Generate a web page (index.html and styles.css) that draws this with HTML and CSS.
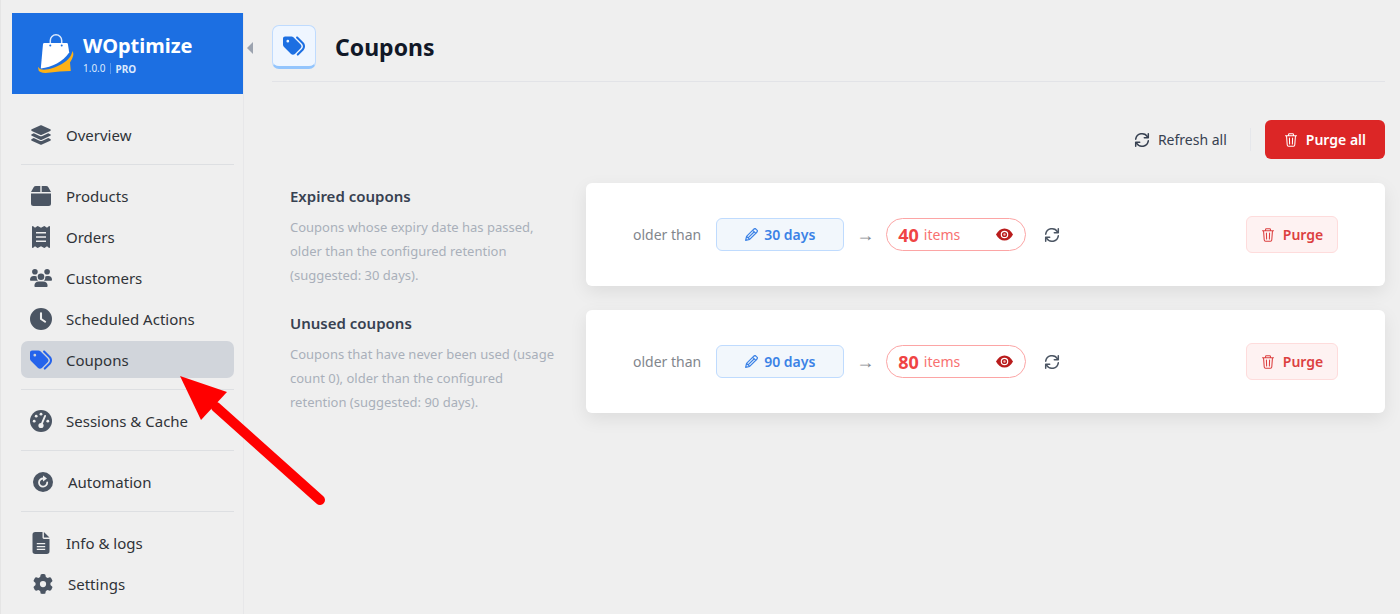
FILE: index.html
```html
<!DOCTYPE html>
<html lang="en">
<head>
    <meta charset="UTF-8">
    <meta name="viewport" content="width=device-width, initial-scale=1.0">
    <title>Coupons - WOptimize</title>
    <link rel="stylesheet" href="styles.css">
</head>
<body>
    <!-- icon sprite -->
    <svg class="sprite" aria-hidden="true">
        <symbol id="i-layers" viewBox="0 0 576 512"><path d="M264.5 5.2c14.9-6.9 32.1-6.9 47 0l218.6 101c8.5 3.9 13.9 12.4 13.9 21.8s-5.4 17.9-13.9 21.8l-218.6 101c-14.9 6.9-32.1 6.9-47 0L45.9 149.8C37.4 145.8 32 137.3 32 128s5.4-17.9 13.9-21.8L264.5 5.2zM476.9 209.6l53.2 24.6c8.5 3.9 13.9 12.4 13.9 21.8s-5.4 17.9-13.9 21.8l-218.6 101c-14.9 6.9-32.1 6.9-47 0L45.9 277.8C37.4 273.8 32 265.3 32 256s5.4-17.9 13.9-21.8l53.2-24.6 152 70.2c23.4 10.8 50.4 10.8 73.8 0l152-70.2zm-152 198.2l152-70.2 53.2 24.6c8.5 3.9 13.9 12.4 13.9 21.8s-5.4 17.9-13.9 21.8l-218.6 101c-14.9 6.9-32.1 6.9-47 0L45.9 405.8C37.4 401.8 32 393.3 32 384s5.4-17.9 13.9-21.8l53.2-24.6 152 70.2c23.4 10.8 50.4 10.8 73.8 0z"/></symbol>
        <symbol id="i-box" viewBox="0 0 20 20"><path d="M5 0h4.300v6H0l2.500-4.600Q3.300 0 5 0zM10.700 0H15q1.700 0 2.500 1.400L20 6h-9.300zM0 7.400h20V17.500q0 2.500-2.500 2.500h-15Q0 20 0 17.500z"/></symbol>
        <symbol id="i-receipt" viewBox="0 0 18 22"><path fill-rule="evenodd" d="M0 .5Q.5-.2 1.200.3L3 1.700 5.200.2Q5.700-.1 6.200.2L9 1.700 11.800.2q.5-.3 1 0L15 1.700 16.800.3Q17.500-.2 18 .5v21q-.5.7-1.200.2L15 20.300l-2.200 1.500q-.5.3-1 0L9 20.300l-2.800 1.500q-.5.3-1 0L3 20.300 1.200 21.700Q.5 22.200 0 21.500zM4 6v1.600h10V6zm0 4.200v1.600h10v-1.600zm0 4.200V16h10v-1.600z"/></symbol>
        <symbol id="i-users" viewBox="0 0 22 18"><circle cx="4.900" cy="2.800" r="2.800"/><circle cx="17.100" cy="2.800" r="2.800"/><circle cx="11" cy="7.700" r="3.300"/><path d="M0 10.800Q0 7 3.700 7h1.500q.8 0 1.500.4-.3 2.300 1.300 4.300H.8q-.8 0-.8-.9zM22 10.800Q22 7 18.300 7h-1.500q-.8 0-1.500.4.300 2.300-1.300 4.300h7.200q.8 0 .8-.9zM4.400 17q0-4.600 4.400-4.600h4.400q4.400 0 4.400 4.600 0 .9-.9.9H5.300q-.9 0-.9-.9z"/></symbol>
        <symbol id="i-clock" viewBox="0 0 512 512"><path d="M256 0a256 256 0 1 1 0 512A256 256 0 1 1 256 0zM232 120V256c0 8 4 15.500 10.700 20l96 64c11 7.400 25.900 4.400 33.300-6.700s4.400-25.900-6.700-33.300L280 243.200V120c0-13.300-10.700-24-24-24s-24 10.700-24 24z"/></symbol>
        <symbol id="i-tags" viewBox="0 0 512 512"><path d="M345 39.100L472.800 168.400c52.400 53 52.400 138.200 0 191.200L360.800 472.900c-9.300 9.400-24.500 9.500-33.900 .2s-9.500-24.500-.2-33.900L438.600 325.900c33.900-34.300 33.900-89.400 0-123.700L310.900 72.900c-9.300-9.400-9.200-24.600 .2-33.900s24.600-9.200 33.900 .2zM0 229.500V80C0 53.500 21.500 32 48 32H197.500c17 0 33.300 6.700 45.300 18.700l168 168c25 25 25 65.500 0 90.500L277.300 442.700c-25 25-65.500 25-90.500 0l-168-168C6.700 262.700 0 246.500 0 229.500zM144 144a32 32 0 1 0 -64 0 32 32 0 1 0 64 0z"/></symbol>
        <symbol id="i-gauge" viewBox="0 0 22 22"><circle cx="11" cy="11" r="11"/><g fill="#efefef"><circle cx="11" cy="4.200" r="1.400"/><circle cx="6.200" cy="6.200" r="1.400"/><circle cx="4.200" cy="11.200" r="1.400"/><circle cx="17.800" cy="11.200" r="1.400"/><circle cx="11" cy="15.500" r="2.600"/></g><path d="M11.500 14.500l3.600-8.600" fill="none" stroke="#efefef" stroke-width="1.900" stroke-linecap="round"/></symbol>
        <symbol id="i-auto" viewBox="0 0 20 20"><circle cx="10" cy="10" r="10"/><path d="M10.500 6.500A4.100 4.100 0 1 0 14.200 10.500" fill="none" stroke="#efefef" stroke-width="1.800" stroke-linecap="round"/><path d="M10 3.500l4 3-4 3z" fill="#efefef"/></symbol>
        <symbol id="i-file" viewBox="0 0 17 22"><path fill-rule="evenodd" d="M2.700 0H10v5.500q0 1.400 1.400 1.400H17v12.400q0 2.700-2.700 2.700H2.700Q0 22 0 19.300V2.700Q0 0 2.700 0zm8.700 0L17 5.500h-5.600zM4.300 11v1.300h8.400V11zm0 2.900v1.300h8.400v-1.300zm0 2.900v1.300h8.400v-1.300z"/></symbol>
        <symbol id="i-gear" viewBox="0 0 512 512"><path d="M495.900 166.600c3.200 8.700 .5 18.400-6.400 24.600l-43.300 39.400c1.100 8.300 1.700 16.800 1.700 25.400s-.6 17.100-1.700 25.400l43.300 39.400c6.900 6.200 9.600 15.900 6.400 24.600c-4.400 11.900-9.700 23.300-15.800 34.300l-4.700 8.100c-6.600 11-14 21.400-22.100 31.200c-5.900 7.200-15.700 9.600-24.500 6.800l-55.700-17.700c-13.400 10.300-28.200 18.900-44 25.400l-12.500 57.100c-2 9.100-9 16.300-18.200 17.800c-13.800 2.300-28 3.500-42.500 3.500s-28.700-1.200-42.500-3.500c-9.200-1.500-16.200-8.700-18.200-17.800l-12.500-57.100c-15.800-6.500-30.600-15.100-44-25.400L83.100 425.900c-8.800 2.800-18.600 .3-24.500-6.800c-8.100-9.800-15.500-20.200-22.100-31.200l-4.700-8.100c-6.100-11-11.400-22.400-15.800-34.300c-3.200-8.700-.5-18.400 6.400-24.600l43.300-39.400C64.600 273.100 64 264.600 64 256s.6-17.100 1.700-25.400L22.400 191.200c-6.900-6.200-9.600-15.900-6.400-24.600c4.400-11.900 9.700-23.300 15.800-34.300l4.700-8.100c6.600-11 14-21.400 22.100-31.200c5.900-7.200 15.700-9.600 24.500-6.800l55.700 17.700c13.400-10.300 28.200-18.900 44-25.400l12.500-57.100c2-9.100 9-16.300 18.200-17.800C227.300 1.200 241.500 0 256 0s28.700 1.200 42.500 3.500c9.200 1.500 16.200 8.700 18.200 17.800l12.500 57.100c15.800 6.500 30.600 15.100 44 25.400l55.700-17.700c8.800-2.800 18.600-.3 24.500 6.800c8.100 9.800 15.500 20.200 22.100 31.200l4.700 8.100c6.100 11 11.400 22.400 15.800 34.300zM256 336a80 80 0 1 0 0-160 80 80 0 1 0 0 160z"/></symbol>
        <symbol id="i-refresh" viewBox="0 0 16 16"><path d="M1.700 7.200A6.400 6.400 0 0 1 13.500 4.800M14.300 8.800A6.400 6.400 0 0 1 2.500 11.200" fill="none" stroke="currentColor" stroke-width="1.500" stroke-linecap="round"/><path d="M14.300 1.800v4H10.300M1.700 14.200v-4h4" fill="none" stroke="currentColor" stroke-width="1.500" stroke-linecap="round" stroke-linejoin="round"/></symbol>
        <symbol id="i-trash" viewBox="0 0 14 16"><path d="M.7 3.200h12.600M4.200 3V1.700Q4.200.8 5.100.8h3.800q.9 0 .9.900V3M1.900 3.300l.8 10.500q.1 1.400 1.500 1.400h5.600q1.400 0 1.500-1.400l.8-10.500M5.200 5.700l.2 6.800M8.800 5.700l-.2 6.800" fill="none" stroke="currentColor" stroke-width="1.200" stroke-linecap="round" stroke-linejoin="round"/></symbol>
        <symbol id="i-pencil" viewBox="0 0 14 14"><path d="M.7 13.300l1-4.300L9.200 1.500q1-1 2-.9l2.200 2.200q.1 1-.9 2L5 12.300zM1.700 9L5 12.300M8.300 2.500l3.200 3.200M3.300 10.700l6.700-6.700" fill="none" stroke="currentColor" stroke-width="1.300" stroke-linejoin="round"/></symbol>
        <symbol id="i-eye" viewBox="0 0 16 12"><path d="M0 6Q3 .3 8 .3T16 6q-3 5.700-8 5.700T0 6z"/><circle cx="8" cy="6" r="3" fill="none" stroke="#fff" stroke-width="1.100"/><circle cx="8" cy="6" r="1.100" fill="#f3b4b4"/></symbol>
    </svg>

    <div class="app">
        <aside class="sidebar">
            <div class="brand">
                <svg class="brand-logo" viewBox="0 0 36 40" aria-hidden="true">
                    <path d="M12.300 10V6.500a5.700 5.700 0 0 1 11.400 0V10" fill="none" stroke="#dbe9fd" stroke-width="1.500"/>
                    <path d="M6.300 9h22.400q1 0 1.200 1l1.300 8.500C25 28 14 33 2.800 34.500L5 10q.2-1 1.300-1z" fill="#fff"/>
                    <circle cx="12.300" cy="11.500" r="1" fill="#1c6fe2"/><circle cx="23.700" cy="11.500" r="1" fill="#1c6fe2"/>
                    <path d="M34.300 17q1.700 2.200.7 5.200-.9 3.300-3 6.300l.8 8.500q-12 .2-20 1.500-7 1.100-10.300-.4Q-.3 37 .2 32.800q1.400 3.500 7.800 2.700C20 34 33.500 26 34.300 17z" fill="#fdb116"/>
                </svg>
                <div>
                    <div class="brand-name">WOptimize</div>
                    <div class="brand-meta"><span>1.0.0</span><strong>PRO</strong></div>
                </div>
            </div>
            <nav class="nav">
                <a href="#"><svg><use href="#i-layers"/></svg>Overview</a>
                <hr>
                <a href="#"><svg class="sm"><use href="#i-box"/></svg>Products</a>
                <a href="#"><svg><use href="#i-receipt"/></svg>Orders</a>
                <a href="#"><svg><use href="#i-users"/></svg>Customers</a>
                <a href="#"><svg><use href="#i-clock"/></svg>Scheduled Actions</a>
                <a href="#" class="active" aria-current="page"><svg><use href="#i-tags"/></svg>Coupons</a>
                <hr>
                <a href="#"><svg><use href="#i-gauge"/></svg>Sessions &amp; Cache</a>
                <hr>
                <a href="#" class="inset"><svg class="sm"><use href="#i-auto"/></svg>Automation</a>
                <hr>
                <a href="#"><svg><use href="#i-file"/></svg>Info &amp; logs</a>
                <a href="#" class="inset"><svg class="sm"><use href="#i-gear"/></svg>Settings</a>
            </nav>
            <button class="collapse" type="button" aria-label="Collapse menu"></button>
        </aside>

        <main class="main">
            <header class="page-header">
                <span class="page-icon"><svg><use href="#i-tags"/></svg></span>
                <h1>Coupons</h1>
            </header>

            <div class="toolbar">
                <button class="refresh-all" type="button"><svg><use href="#i-refresh"/></svg>Refresh all</button>
                <button class="purge-all" type="button"><svg><use href="#i-trash"/></svg>Purge all</button>
            </div>

            <section class="row">
                <div class="info">
                    <h2>Expired coupons</h2>
                    <p>Coupons whose expiry date has passed, older than the configured retention (suggested: 30 days).</p>
                </div>
                <div class="card">
                    <span class="older">older than</span>
                    <button class="days" type="button"><svg><use href="#i-pencil"/></svg>30 days</button>
                    <span class="arrow">→</span>
                    <button class="items" type="button"><strong>40</strong>items<svg><use href="#i-eye"/></svg></button>
                    <button class="refresh" type="button" aria-label="Refresh expired coupons"><svg><use href="#i-refresh"/></svg></button>
                    <button class="purge" type="button"><svg><use href="#i-trash"/></svg>Purge</button>
                </div>
            </section>

            <section class="row">
                <div class="info">
                    <h2>Unused coupons</h2>
                    <p>Coupons that have never been used (usage count 0), older than the configured retention (suggested: 90 days).</p>
                </div>
                <div class="card">
                    <span class="older">older than</span>
                    <button class="days" type="button"><svg><use href="#i-pencil"/></svg>90 days</button>
                    <span class="arrow">→</span>
                    <button class="items" type="button"><strong>80</strong>items<svg><use href="#i-eye"/></svg></button>
                    <button class="refresh" type="button" aria-label="Refresh unused coupons"><svg><use href="#i-refresh"/></svg></button>
                    <button class="purge" type="button"><svg><use href="#i-trash"/></svg>Purge</button>
                </div>
            </section>
        </main>
    </div>

    <!-- pointer over the active menu item -->
    <svg class="pointer" viewBox="0 0 147 130" aria-hidden="true">
        <path d="M36 31L140 124" stroke="#f00" stroke-width="10" stroke-linecap="round"/>
        <path d="M0 0L47 16 21 44z" fill="#f00"/>
    </svg>
</body>
</html>
```
FILE: styles.css
```css
* {
    box-sizing: border-box;
}
body {
    margin: 0;
    background: #efefef;
    border-left: 1px solid #e5e5e5;
    font-family: "Noto Sans", "Open Sans", sans-serif;
    font-size: 15px;
    color: #374151;
}
svg {
    fill: currentColor;
    flex: none;
}
button {
    font: inherit;
    cursor: pointer;
    display: flex;
    align-items: center;
    justify-content: center;
}
h1, h2, p {
    margin: 0;
}
.sprite {
    position: absolute;
    width: 0;
    height: 0;
}
.app {
    display: flex;
    min-height: 100vh;
    padding: 13px 15px 0 11px;
}

/* sidebar */
.sidebar {
    position: relative;
    flex: none;
    width: 232px;
    border-right: 1px solid #e7e7e9;
}
.brand {
    display: flex;
    align-items: center;
    gap: 9px;
    height: 81px;
    padding-left: 26px;
    background: #1c6fe2;
    color: #fff;
}
.brand-logo {
    width: 36px;
    height: 40px;
}
.brand-name {
    padding-top: 2px;
    font-size: 20px;
    line-height: 26px;
    font-weight: 700;
}
.brand-meta {
    display: flex;
    align-items: center;
    margin-top: 2px;
    font-size: 10px;
    line-height: 16px;
    color: #dbe9fd;
}
.brand-meta span {
    padding-right: 4px;
    margin-right: 5px;
    line-height: 11px;
    border-right: 1px solid #5b98ec;
}
.brand-meta strong {
    font-weight: 700;
}
.collapse {
    position: absolute;
    top: 29px;
    right: -10px;
    width: 6px;
    height: 12px;
    padding: 0;
    border: 0;
    background: #9ca3af;
    clip-path: polygon(100% 0, 100% 100%, 0 50%);
}
.nav {
    display: flex;
    flex-direction: column;
    gap: 4px;
    padding: 22px 9px 12px;
}
.nav a {
    display: flex;
    align-items: center;
    gap: 14px;
    height: 37px;
    padding-left: 9px;
    border-radius: 7px;
    color: #2f3338;
    text-decoration: none;
}
.nav a.inset {
    padding-left: 11px;
}
.nav svg {
    width: 22px;
    height: 22px;
    color: #4b5563;
}
.nav svg.sm {
    height: 20px;
}
.nav a.active {
    background: #d1d5db;
}
.nav a.active svg {
    color: #2563eb;
}
.nav hr {
    width: 100%;
    height: 1px;
    margin: 7px 0 8px;
    border: 0;
    background: #dddfe2;
}

/* content */
.main {
    flex: 1;
    min-width: 0;
    padding: 12px 0 24px 28px;
}
.page-header {
    display: flex;
    align-items: center;
    gap: 19px;
    padding-bottom: 12px;
    border-bottom: 1px solid #e2e3e7;
}
.page-icon {
    display: flex;
    align-items: center;
    justify-content: center;
    width: 44px;
    height: 44px;
    border: 1px solid #bfdbfe;
    border-bottom: 3px solid #93c5fd;
    border-radius: 7px;
    background: #eff6ff;
    color: #1c6fe2;
}
.page-icon svg {
    width: 22px;
    height: 22px;
}
h1 {
    font-size: 23px;
    line-height: 32px;
    font-weight: 700;
    color: #111827;
}
.toolbar {
    display: flex;
    justify-content: flex-end;
    align-items: center;
    margin: 38px 0 24px;
    font-size: 14px;
}
.refresh-all {
    gap: 8px;
    height: 23px;
    margin-right: 14px;
    padding: 0 23px 0 0;
    border: 0;
    border-right: 1px solid #e5e7eb;
    background: none;
    color: #374151;
}
.refresh-all svg,
.refresh svg {
    width: 16px;
    height: 16px;
}
.purge-all {
    gap: 8px;
    height: 39px;
    padding: 0 19px;
    border: 0;
    border-radius: 6px;
    background: #dc2626;
    color: #fff;
    font-weight: 600;
}
.purge-all svg,
.purge svg {
    width: 14px;
    height: 14px;
}
.row {
    display: grid;
    grid-template-columns: 296px 1fr;
    align-items: start;
    gap: 18px;
    margin-bottom: 23px;
}
.info {
    padding: 0 10px 0 18px;
}
h2 {
    margin-bottom: 6px;
    font-size: 15px;
    line-height: 26px;
    font-weight: 600;
    color: #374151;
}
.info p {
    font-size: 13px;
    line-height: 24px;
    color: #a9afba;
}
.card {
    display: flex;
    align-items: center;
    padding: 33px 47px;
    border-radius: 6px;
    background: #fff;
    box-shadow: 0 6px 18px rgba(0, 0, 0, 0.08);
}
.older {
    margin-right: 15px;
    font-size: 14px;
    color: #82868d;
}
.days {
    gap: 6px;
    width: 128px;
    height: 33px;
    border: 1px solid #bfdbfe;
    border-radius: 6px;
    background: #f2f7fc;
    color: #3b82e6;
    font-size: 14px;
    font-weight: 600;
}
.days svg {
    width: 13px;
    height: 13px;
}
.arrow {
    width: 42px;
    font-family: "Liberation Sans", sans-serif;
    font-size: 18px;
    line-height: 20px;
    text-align: center;
    color: #82868d;
}
.items {
    gap: 5px;
    width: 140px;
    height: 33px;
    padding: 0 12px 0 11px;
    border: 1px solid #fca5a5;
    border-radius: 17px;
    background: #fff;
    color: #f87171;
    font-size: 14px;
}
.items strong {
    font-size: 18px;
    color: #ef4444;
}
.items svg {
    width: 17px;
    height: 13px;
    margin-left: auto;
    color: #b91c1c;
}
.refresh {
    margin-left: 18px;
    padding: 0;
    border: 0;
    background: none;
    color: #4b5563;
}
.purge {
    gap: 8px;
    width: 92px;
    height: 37px;
    margin-left: auto;
    border: 1px solid #fedcdc;
    border-radius: 6px;
    background: #fef2f2;
    color: #dc3f3f;
    font-size: 14px;
    font-weight: 600;
}

.pointer {
    position: absolute;
    top: 376px;
    left: 180px;
    width: 147px;
    height: 130px;
    pointer-events: none;
}
```
